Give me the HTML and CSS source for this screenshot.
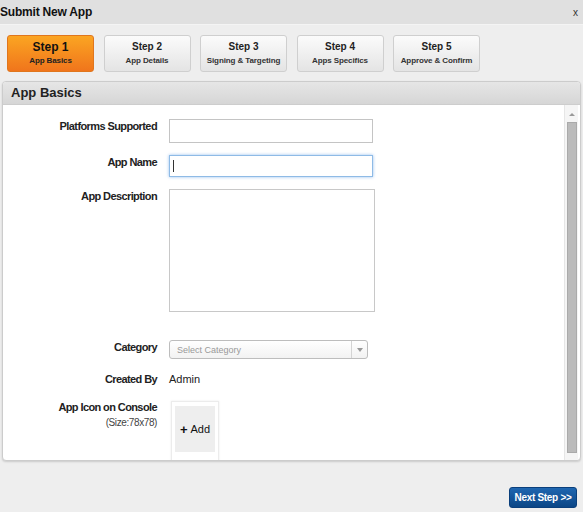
FILE: index.html
```html
<!DOCTYPE html>
<html lang="en">
<head>
  <meta charset="UTF-8">
  <title>Submit New App</title>
  <link rel="stylesheet" href="styles.css">
</head>
<body>

<div class="dialog">
  <div class="titlebar">
    <span class="title">Submit New App</span>
    <span class="close">x</span>
  </div>

  <div class="steps">
    <div class="step active"><b>Step 1</b><span>App Basics</span></div>
    <div class="step"><b>Step 2</b><span>App Details</span></div>
    <div class="step"><b>Step 3</b><span>Signing &amp; Targeting</span></div>
    <div class="step"><b>Step 4</b><span>Apps Specifics</span></div>
    <div class="step"><b>Step 5</b><span>Approve &amp; Confirm</span></div>
  </div>

  <div class="panel">
    <div class="panel-header">App Basics</div>
    <div class="panel-body">
      <div class="form">
        <div class="row">
          <label>Platforms Supported</label>
          <input type="text" class="field">
        </div>
        <div class="row">
          <label>App Name</label>
          <div class="field focused"><span class="caret"></span></div>
        </div>
        <div class="row">
          <label>App Description</label>
          <textarea class="area"></textarea>
        </div>
        <div class="row row-cat">
          <label>Category</label>
          <div class="select">
            <span>Select Category</span>
            <span class="arrow"></span>
          </div>
        </div>
        <div class="row row-by">
          <label>Created By</label>
          <span class="value">Admin</span>
        </div>
        <div class="row">
          <label>App Icon on Console<small>(Size:78x78)</small></label>
          <div class="icon-box">
            <div class="icon-add"><b>+</b>&nbsp;Add</div>
          </div>
        </div>
      </div>
      <div class="scrollbar">
        <span class="up"></span>
        <span class="thumb"></span>
      </div>
    </div>
  </div>

  <div class="footer">
    <button class="next">Next Step &gt;&gt;</button>
  </div>
</div>

</body>
</html>
```

FILE: styles.css
```css
body {
  margin: 0;
  font-family: "Liberation Sans", Arial, sans-serif;
  background: #eeeeee;
  color: #222;
}

.dialog {
  width: 583px;
  height: 512px;
  overflow: hidden;
}

.titlebar {
  height: 24px;
  background: #e0e0e0;
  border-bottom: 1px solid #f4f4f4;
  display: flex;
  align-items: center;
  justify-content: space-between;
  padding: 0 5px 0 0;
}

.title {
  font-size: 12px;
  font-weight: bold;
  color: #111;
  letter-spacing: -0.2px;
}

.close {
  font-size: 10px;
  color: #333;
}

/* Steps */
.steps {
  display: flex;
  gap: 9.5px;
  padding: 10px 0 0 7px;
  height: 56px;
  box-sizing: border-box;
}

.step {
  width: 87px;
  height: 37px;
  box-sizing: border-box;
  border: 1px solid #cfcfcf;
  border-radius: 3px;
  background: linear-gradient(#fbfbfb, #e4e4e4);
  display: flex;
  flex-direction: column;
  align-items: center;
  justify-content: center;
  color: #222;
}

.step b {
  font-size: 10px;
  line-height: 14px;
}

.step span {
  font-size: 8px;
  font-weight: bold;
  line-height: 14px;
  color: #333;
  letter-spacing: -0.1px;
}

.step.active {
  background: linear-gradient(#fba522, #f0751c);
  border-color: #e0761e;
}

.step.active b {
  font-size: 12px;
  line-height: 14px;
  color: #111;
}

.step.active span {
  color: #222;
}

/* Panel */
.panel {
  margin: 0 2px;
  border: 1px solid #cccccc;
  border-radius: 4px;
  background: #fff;
  box-shadow: 0 1px 2px rgba(0, 0, 0, 0.15);
  overflow: hidden;
}

.panel-header {
  height: 22px;
  line-height: 22px;
  padding-left: 8px;
  font-size: 13px;
  font-weight: bold;
  color: #222;
  background: linear-gradient(#e6e6e6, #d6d6d6);
  border-bottom: 1px solid #cdcdcd;
}

.panel-body {
  display: flex;
  height: 355px;
  overflow: hidden;
}

.form {
  flex: 1;
  padding-top: 14px;
}

.row {
  display: flex;
  align-items: flex-start;
  margin-bottom: 12px;
}

.row label {
  width: 154px;
  flex: none;
  text-align: right;
  font-size: 11px;
  font-weight: bold;
  letter-spacing: -0.6px;
  color: #222;
  padding-top: 1px;
  margin-right: 12px;
}

.row label small {
  display: block;
  font-size: 10px;
  font-weight: normal;
  color: #444;
  margin-top: 4px;
  letter-spacing: -0.4px;
}

.field {
  width: 204px;
  height: 24px;
  box-sizing: border-box;
  border: 1px solid #c4c4c4;
  margin: 0;
  padding: 0 4px;
  font-size: 11px;
  background: #fff;
}

.field.focused {
  height: 22px;
  border-color: #8fbbe6;
  box-shadow: 0 0 3px rgba(80, 150, 230, 0.6);
  display: flex;
  align-items: center;
  padding-left: 3px;
}

.caret {
  width: 1px;
  height: 12px;
  background: #333;
}

.area {
  width: 206px;
  height: 123px;
  box-sizing: border-box;
  border: 1px solid #c8c8c8;
  margin: 0;
  resize: none;
}

.row-cat {
  margin-top: 28px;
  margin-bottom: 13px;
}

.select {
  width: 199px;
  height: 19px;
  box-sizing: border-box;
  border: 1px solid #bdbdbd;
  border-radius: 3px;
  background: linear-gradient(#fff, #f2f2f2);
  display: flex;
  align-items: center;
  justify-content: space-between;
  font-size: 9px;
  color: #999;
  padding-left: 7px;
}

.select .arrow {
  width: 15px;
  height: 17px;
  border-left: 1px solid #d4d4d4;
  position: relative;
}

.select .arrow::after {
  content: "";
  position: absolute;
  left: 5px;
  top: 7px;
  border-left: 3px solid transparent;
  border-right: 3px solid transparent;
  border-top: 4px solid #999;
}

.row-by {
  margin-bottom: 15px;
}

.value {
  font-size: 11px;
  color: #222;
  padding-top: 1px;
}

.icon-box {
  margin-top: 1px;
  margin-left: 2px;
  width: 48px;
  height: 60px;
  border: 1px solid #ececec;
  box-shadow: 0 0 2px rgba(0, 0, 0, 0.08);
  padding: 4px 3px;
  box-sizing: border-box;
}

.icon-add {
  background: #eeeeee;
  height: 46px;
  display: flex;
  align-items: center;
  justify-content: center;
  font-size: 11px;
  color: #111;
}

.icon-add b {
  font-size: 13px;
}

/* fake scrollbar */
.scrollbar {
  width: 13px;
  margin-right: 2px;
  background: #f5f5f5;
  border-left: 1px solid #e6e6e6;
  display: flex;
  flex-direction: column;
  align-items: center;
}

.scrollbar .up {
  margin-top: 8px;
  width: 0;
  height: 0;
  border-left: 3px solid transparent;
  border-right: 3px solid transparent;
  border-bottom: 3px solid #999;
}

.scrollbar .thumb {
  margin-top: 6px;
  width: 10px;
  height: 331px;
  background: #bbbbbb;
  border: 1px solid #aaaaaa;
  box-sizing: border-box;
}

/* Footer */
.footer {
  display: flex;
  justify-content: flex-end;
  padding: 26px 6px 0 0;
}

.next {
  width: 68px;
  height: 21px;
  border: 1px solid #0a3f7c;
  border-radius: 3px;
  background: linear-gradient(#1f66b0, #0b4686);
  color: #fff;
  font-family: "Liberation Sans", Arial, sans-serif;
  font-size: 10px;
  font-weight: bold;
  letter-spacing: -0.3px;
  padding: 0;
}
```
